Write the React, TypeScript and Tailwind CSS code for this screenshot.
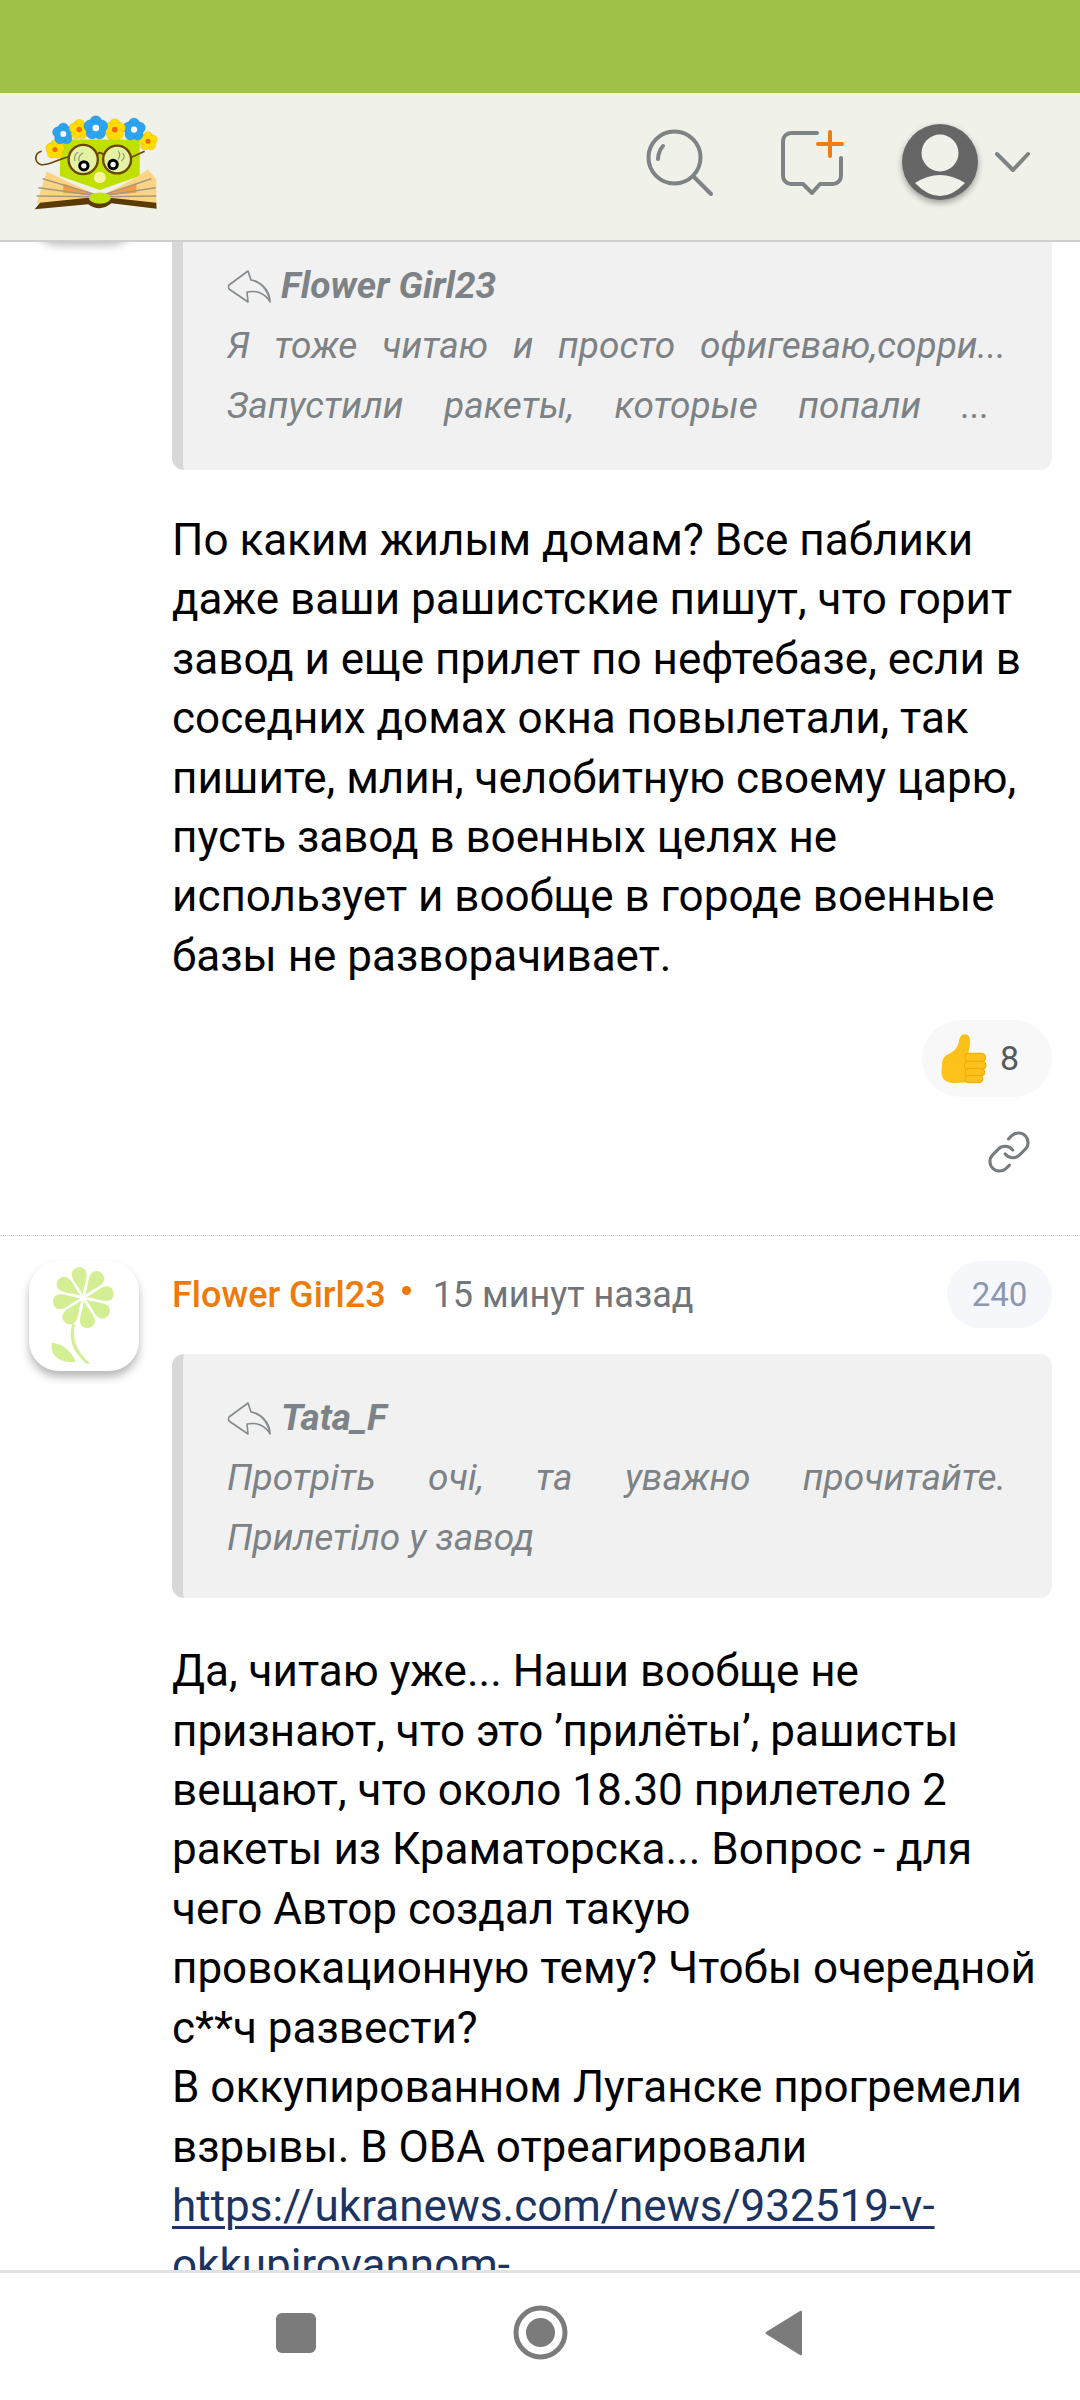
import { Link } from 'lucide-react';

function Bloom({ x, y, kind, r = 15 }: { x: number; y: number; kind: 'blue' | 'yellow'; r?: number }) {
  const petal = kind === 'blue' ? '#2ea3ef' : '#ffdd00';
  const middle = kind === 'blue' ? '#ffffff' : '#f26a0f';
  return (
    <g transform={`translate(${x} ${y})`}>
      {[0, 72, 144, 216, 288].map((angle) => (
        <circle
          key={angle}
          cx={0}
          cy={-r * 1.05}
          r={r}
          fill={petal}
          stroke={kind === 'blue' ? '#1a86d0' : '#e0a800'}
          strokeWidth={1}
          transform={`rotate(${angle})`}
        />
      ))}
      <circle r={r} fill={petal} />
      <circle r={r * 0.55} fill={middle} />
    </g>
  );
}

function Logo() {
  return (
    <svg width="127" height="98" viewBox="40 50 380 295" className="shrink-0">
      <path d="M120 130 L360 130 L360 240 L240 282 L120 240 Z" fill="#bfe000" />
      <path d="M150 180 C100 195 80 210 62 205 C42 198 42 170 65 165" fill="none" stroke="#6b4606" strokeWidth="5" />
      <path d="M332 185 L375 165" stroke="#6b4606" strokeWidth="5" />
      <circle cx="190" cy="190" r="44" fill="#e4f2a4" stroke="#6b4606" strokeWidth="7" />
      <circle cx="292" cy="190" r="42" fill="#e4f2a4" stroke="#6b4606" strokeWidth="7" />
      <path d="M232 175 Q240 165 250 175" fill="none" stroke="#6b4606" strokeWidth="6" />
      <path d="M165 195 Q160 175 175 168 M178 195 Q172 180 190 170" fill="none" stroke="#8d9a70" strokeWidth="3.5" />
      <path d="M295 190 Q305 175 295 165 M305 195 Q320 180 308 170" fill="none" stroke="#8d9a70" strokeWidth="3.5" />
      <circle cx="192" cy="209" r="17" fill="#000" />
      <circle cx="192" cy="209" r="8" fill="#fff" />
      <circle cx="280" cy="205" r="17" fill="#000" />
      <circle cx="280" cy="205" r="8" fill="#fff" />
      <ellipse cx="240" cy="244" rx="18" ry="17" fill="#fbf2a0" />
      <path d="M50 322 L80 226 Q160 265 240 300 L240 320 Z" fill="#fbd583" />
      <path d="M410 322 L410 250 L385 220 Q320 265 240 300 L240 320 Z" fill="#fbd583" />
      <path d="M130 262 L240 300 L130 290 Z M350 262 L240 300 L350 290 Z" fill="#f59b45" />
      <path d="M68 248 L225 295 M55 275 L225 298 M50 300 L225 302 M395 248 L255 295 M408 275 L255 298 M410 300 L255 302" stroke="#a59a80" strokeWidth="4.5" />
      <path d="M44 340 L60 320 L205 305 Q240 330 270 305 L410 320 L411 338 L275 322 Q240 350 205 325 Z" fill="#5c3a06" />
      <ellipse cx="240" cy="306" rx="33" ry="17" fill="#c3e40a" />
      <Bloom x={105} y={160} kind="yellow" r={14} />
      <Bloom x={385} y={135} kind="yellow" r={14} />
      <Bloom x={130} y={113} kind="blue" r={16} />
      <Bloom x={178} y={100} kind="yellow" r={15} />
      <Bloom x={343} y={100} kind="blue" r={17} />
      <Bloom x={285} y={100} kind="yellow" r={16} />
      <Bloom x={228} y={95} kind="blue" r={18} />
    </svg>
  );
}

function FlowerAvatar() {
  return (
    <svg viewBox="0 0 330 330" className="h-full w-full">
      {[-10, 35, 80, 125, 170, 215, 260, 305].map((angle) => (
        <path
          key={angle}
          d="M0 -8 C-4 -30 -24 -55 -22 -74 C-20 -98 20 -98 22 -74 C24 -55 4 -30 0 -8 Z"
          fill="#d4ee94"
          transform={`translate(163 110) rotate(${angle})`}
        />
      ))}
      <path d="M138 190 Q122 255 184 308 L172 308 Q110 255 130 190 Z" fill="#d4ee94" />
      <path d="M68 245 C118 250 135 290 140 302 C100 306 64 292 68 245 Z" fill="#d4ee94" />
    </svg>
  );
}

function ReplyArrow() {
  return (
    <svg width="44" height="33" viewBox="0 0 44 33" fill="none" stroke="#858a8d" strokeWidth="1.6" strokeLinejoin="round" className="shrink-0">
      <path d="M21 1 L2 15 Q1 17 2 19 L21 32 L20 22 C30 20 39 24 43 32 C43 20 33 11 24 10 Z" />
      <path d="M24 10 C32 12 40 18 43 32" strokeWidth="1" />
    </svg>
  );
}

function ThumbsUpEmoji() {
  return (
    <svg width="47" height="50" viewBox="0 0 140 150" className="shrink-0">
      <path d="M6 85 Q8 65 30 58 Q50 48 56 25 Q58 2 72 1 Q92 0 90 28 L84 62 L100 140 Q60 150 30 146 Q4 142 4 115 Z" fill="#fcc21b" />
      <rect x="74" y="58" width="62" height="26" rx="12" fill="#fcc21b" stroke="#f2a600" strokeWidth="3" />
      <rect x="72" y="82" width="66" height="24" rx="12" fill="#fcc21b" stroke="#f2a600" strokeWidth="3" />
      <rect x="74" y="104" width="60" height="22" rx="11" fill="#fcc21b" stroke="#f2a600" strokeWidth="3" />
      <rect x="74" y="124" width="54" height="22" rx="11" fill="#fcc21b" stroke="#f2a600" strokeWidth="3" />
    </svg>
  );
}

type CommentProps = {
  meta?: boolean;
  quoteAuthor: string;
  quoteLines: { text: string; justify?: boolean; trim?: boolean }[];
  children: React.ReactNode;
  footer?: boolean;
};

function Comment({ meta, quoteAuthor, quoteLines, children, footer }: CommentProps) {
  return (
    <article className="flex gap-[33px] pl-[29px] pr-[28px] pt-[25px]">
      <div className="h-[110px] w-[110px] shrink-0 rounded-[30px] bg-white p-0 shadow-[0_6px_8px_rgba(0,0,0,0.28)]">
        {meta && <FlowerAvatar />}
      </div>
      <div className="min-w-0 flex-1">
        {/* Author row */}
        <div className="mb-[26px] flex h-[67px] items-center">
          {meta && (
            <>
              <span className="text-[36px] font-medium text-[#ee7a0a]">Flower Girl23</span>
              <span className="ml-[16px] h-[9px] w-[9px] -translate-y-[4px] rounded-full bg-[#ee7a0a]" />
              <span className="ml-[22px] text-[36px] text-[#6f7579]">15 минут назад</span>
              <span className="ml-auto flex h-[67px] w-[105px] items-center justify-center rounded-full bg-[#f6f7fa] text-[33px] text-[#8b98b2]">
                240
              </span>
            </>
          )}
        </div>

        {/* Quoted message */}
        <div
          className={`rounded-[12px] border-l-[11px] border-[#d8d8d8] bg-[#f1f1f1] pl-[44px] pr-[46px] pt-[34px] italic leading-[60px] text-[#7c8285] ${
            footer ? 'pb-[34px]' : 'pb-[30px]'
          }`}
        >
          <div className="flex items-center gap-[10px] text-[37px] font-bold">
            <ReplyArrow />
            <span>{quoteAuthor}</span>
          </div>
          {quoteLines.map((line) => (
            <div
              key={line.text}
              className={`text-[37px] ${line.justify ? '[text-align-last:justify]' : ''} ${line.trim ? 'pr-[16px]' : ''}`}
            >
              {line.text}
            </div>
          ))}
        </div>

        <div className={`text-[44px] leading-[59.4px] text-black ${footer ? 'mt-[41px]' : 'mt-[44px]'}`}>{children}</div>

        {footer && (
          <div className="flex flex-col items-end pb-[60px]">
            <div className="mt-[34px] flex h-[77px] w-[130px] items-center gap-[13px] rounded-full bg-[#f8f8f8] pl-[18px] text-[34px] text-[#555a5e]">
              <ThumbsUpEmoji />
              <span>8</span>
            </div>
            <Link className="mr-[20px] mt-[32px] h-[46px] w-[46px] text-[#767b7e]" strokeWidth={1.6} />
          </div>
        )}
      </div>
    </article>
  );
}

export default function App() {
  return (
    <div className="flex h-[2400px] w-[1080px] flex-col overflow-hidden bg-white font-['Roboto',sans-serif]">
      {/* Status bar */}
      <div className="h-[93px] shrink-0 bg-[#9fc147]" />

      {/* Header */}
      <header className="z-10 flex h-[149px] shrink-0 items-center justify-between border-b-2 border-[#cfcfcf] bg-[#f0f1e9] pb-[10px] pl-[33px] pr-[50px]">
        <Logo />
        <div className="flex items-center">
          <svg width="70" height="70" viewBox="0 0 70 70" fill="none" stroke="#7e8386" strokeWidth="4" strokeLinecap="round">
            <circle cx="29.5" cy="30.5" r="26" />
            <path d="M49 50 L66 67" />
            <path d="M13 32 Q13.5 24 18 19" />
          </svg>
          <svg width="68" height="70" viewBox="0 0 68 70" fill="none" strokeWidth="4" strokeLinecap="round" strokeLinejoin="round" className="ml-[63px]">
            <path d="M39 6 H13 a8 8 0 0 0 -8 8 V49 a8 8 0 0 0 8 8 H25 L34 66 L42 57 H55 a8 8 0 0 0 8 -8 V31" stroke="#7e8386" />
            <path d="M52 5 V29 M40 17 H64" stroke="#ef7d0f" />
          </svg>
          <svg width="76" height="76" viewBox="0 0 76 76" className="ml-[56px] drop-shadow-[0_3px_3px_rgba(0,0,0,0.35)]">
            <circle cx="38" cy="38" r="38" fill="#666666" />
            <circle cx="38" cy="29" r="18.5" fill="#f0f1e9" />
            <path d="M13 59 Q38 43 63 59 Q38 85 13 59 Z" fill="#f0f1e9" />
          </svg>
          <svg width="35" height="35" viewBox="0 0 35 35" fill="none" stroke="#7e8386" strokeWidth="4" strokeLinecap="round" strokeLinejoin="round" className="ml-[17px]">
            <path d="M2 10 L18 26 L33 10" />
          </svg>
        </div>
      </header>

      {/* Comment list, scrolled so the first comment is cut by the header */}
      <main className="min-h-0 flex-1 overflow-hidden">
        <div className="-mt-[138px]">
          <Comment
            quoteAuthor="Flower Girl23"
            quoteLines={[
              { text: 'Я тоже читаю и просто офигеваю,сорри...', justify: true },
              { text: 'Запустили ракеты, которые попали ...', justify: true, trim: true },
            ]}
            footer
          >
            По каким жилым домам? Все паблики даже ваши рашистские пишут, что горит завод и еще прилет по нефтебазе, если в
            соседних домах окна повылетали, так пишите, млин, челобитную своему царю, пусть завод в военных целях не
            использует и вообще в городе военные базы не разворачивает.
          </Comment>

          <div className="border-t border-dotted border-[#c9c9c9]" />

          <Comment
            meta
            quoteAuthor="Tata_F"
            quoteLines={[
              { text: 'Протріть очі, та уважно прочитайте.', justify: true },
              { text: 'Прилетіло у завод' },
            ]}
          >
            Да, читаю уже... Наши вообще не признают, что это ’прилёты’, рашисты вещают, что около 18.30 прилетело 2 ракеты
            из Краматорска... Вопрос - для чего Автор создал такую провокационную тему? Чтобы очередной с**ч развести?
            <br />
            В оккупированном Луганске прогремели взрывы. В ОВА отреагировали
            <br />
            <a className="text-[#1c3461] underline decoration-[3px] underline-offset-[5px]">
              https://ukranews.com/news/932519-v-okkupirovannom-
            </a>
          </Comment>
        </div>
      </main>

      {/* Android navigation bar */}
      <nav className="flex h-[130px] shrink-0 items-center justify-center gap-[197px] border-t-[3px] border-[#e2e2e2] bg-white pb-[8px] pr-[3px]">
        <div className="h-[40px] w-[40px] rounded-[6px] bg-[#7b7b7b]" />
        <svg width="55" height="55" viewBox="0 0 55 55">
          <circle cx="27.5" cy="27.5" r="24.5" fill="none" stroke="#7b7b7b" strokeWidth="5" />
          <circle cx="27.5" cy="27.5" r="14.5" fill="#7b7b7b" />
        </svg>
        <svg width="37" height="46" viewBox="0 0 37 46">
          <path d="M37 2 Q37 0 35 1 L1 22 Q0 23 1 24 L35 45 Q37 46 37 44 Z" fill="#7b7b7b" />
        </svg>
      </nav>
    </div>
  );
}
